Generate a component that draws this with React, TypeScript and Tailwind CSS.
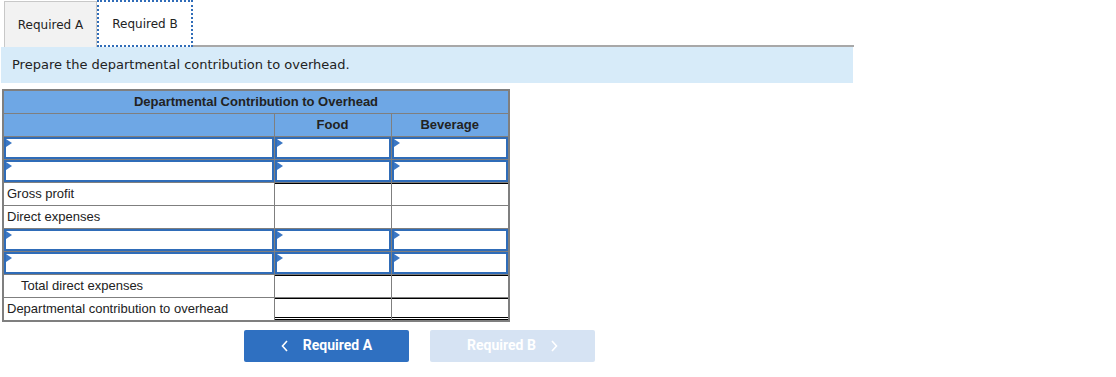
import React from 'react';

const Flag = () => (
  <span className="absolute left-0 top-0 h-0 w-0 border-y-[4px] border-l-[6px] border-y-transparent border-l-[#3b77c4]" />
);

const InputCell = () => (
  <td className="border border-[#7f7f7f] p-0 h-[23px]">
    <div className="relative h-[22px] border-2 border-[#2f6cb8] bg-white">
      <Flag />
    </div>
  </td>
);

const TextCell = ({ children, indent }: { children?: React.ReactNode; indent?: boolean }) => (
  <td className={`border border-[#7f7f7f] h-[23px] py-0 ${indent ? 'pl-[17px]' : 'pl-[3px]'} text-[13px] text-[#222]`}>
    {children}
  </td>
);

const BlankCell = ({ top, double }: { top?: boolean; double?: boolean }) => (
  <td className="border border-[#7f7f7f] p-0 h-[23px]">
    <div className={`h-[22px] ${top ? 'border-t border-t-black' : ''} ${double ? 'border-b-[3px] border-double border-b-black' : ''}`} />
  </td>
);

export default function App() {
  return (
    <div className="w-[1116px] h-[377px] bg-white" style={{ fontFamily: 'Verdana, "DejaVu Sans", sans-serif' }}>
      <div className="flex h-[47px] items-end">
        <div className="ml-[4px] flex h-[46px] w-[93px] items-center justify-center border border-b-0 border-[#c8c8c8] bg-[#f2f2f2] text-[12px] text-[#222]">
          Required A
        </div>
        <div className="flex h-[47px] w-[96px] items-center justify-center border-2 border-dotted border-[#2f6cb8] bg-white text-[12px] text-[#222]">
          Required B
        </div>
        <div className="h-[2px] w-[661px] self-end bg-[#a8a8a8]" />
      </div>
      <div className="ml-[1px] flex h-[36px] w-[852px] items-center bg-[#d7ebf9] pl-[11px] text-[13px] text-[#222]">
        Prepare the departmental contribution to overhead.
      </div>
      <div className="ml-[2px] mt-[6px]" style={{ fontFamily: '"Liberation Sans", Arial, sans-serif' }}>
        <table className="border-collapse border-2 border-[#7f7f7f]">
          <colgroup>
            <col className="w-[271px]" />
            <col className="w-[117px]" />
            <col className="w-[118px]" />
          </colgroup>
          <thead>
            <tr className="bg-[#6ea7e5]">
              <th colSpan={3} className="h-[23px] border border-[#7f7f7f] text-center text-[13px] font-bold text-[#222]">
                Departmental Contribution to Overhead
              </th>
            </tr>
            <tr className="bg-[#6ea7e5]">
              <th className="h-[23px] border border-[#7f7f7f]" />
              <th className="h-[23px] border border-[#7f7f7f] text-center text-[13px] font-bold text-[#222]">Food</th>
              <th className="h-[23px] border border-[#7f7f7f] text-center text-[13px] font-bold text-[#222]">Beverage</th>
            </tr>
          </thead>
          <tbody>
            <tr>
              <InputCell />
              <InputCell />
              <InputCell />
            </tr>
            <tr>
              <InputCell />
              <InputCell />
              <InputCell />
            </tr>
            <tr>
              <TextCell>Gross profit</TextCell>
              <BlankCell top />
              <BlankCell top />
            </tr>
            <tr>
              <TextCell>Direct expenses</TextCell>
              <BlankCell />
              <BlankCell />
            </tr>
            <tr>
              <InputCell />
              <InputCell />
              <InputCell />
            </tr>
            <tr>
              <InputCell />
              <InputCell />
              <InputCell />
            </tr>
            <tr>
              <TextCell indent>Total direct expenses</TextCell>
              <BlankCell top />
              <BlankCell top />
            </tr>
            <tr>
              <TextCell>Departmental contribution to overhead</TextCell>
              <BlankCell top double />
              <BlankCell top double />
            </tr>
          </tbody>
        </table>
      </div>
      <div className="mt-[8px] flex gap-[21px] pl-[244px]" style={{ fontFamily: 'Roboto, "Liberation Sans", sans-serif' }}>
        <button className="flex h-[32px] w-[165px] items-center justify-center gap-[14px] rounded-[2px] bg-[#2f70c1] text-[14px] font-bold text-white">
          <svg width="8" height="12" viewBox="0 0 8 12" fill="none" stroke="white" strokeWidth="1.6">
            <path d="M6 1 L1.5 6 L6 11" />
          </svg>
          Required A
        </button>
        <button className="flex h-[32px] w-[165px] items-center justify-center gap-[14px] rounded-[2px] bg-[#d6e3f3] text-[14px] font-bold text-white">
          Required B
          <svg width="8" height="12" viewBox="0 0 8 12" fill="none" stroke="white" strokeWidth="1.6">
            <path d="M2 1 L6.5 6 L2 11" />
          </svg>
        </button>
      </div>
    </div>
  );
}
